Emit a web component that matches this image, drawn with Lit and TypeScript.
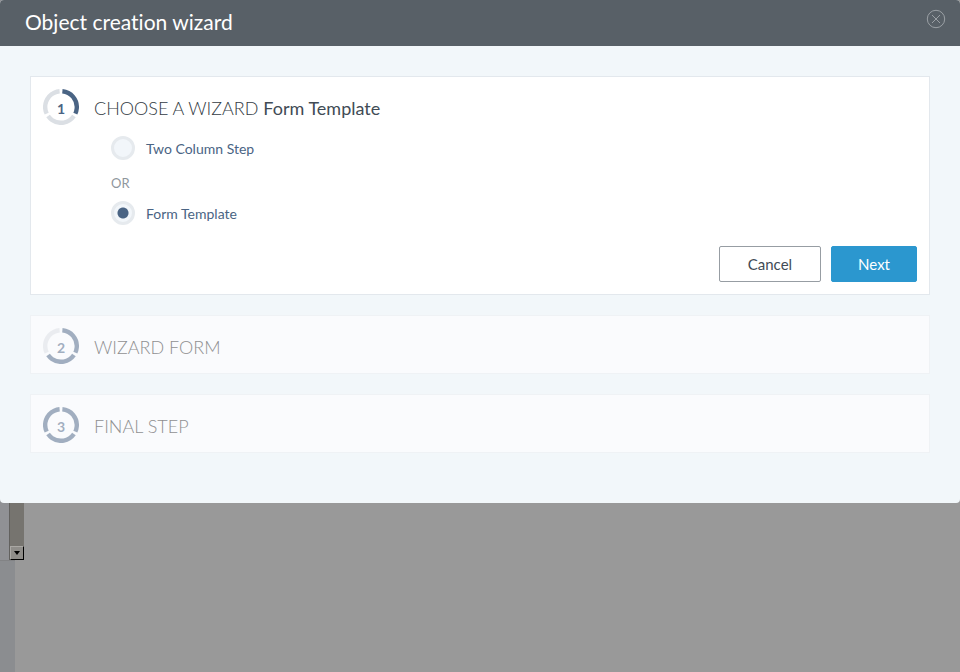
import { LitElement, html, css, svg } from "lit";
import { customElement, property, state } from "lit/decorators.js";

@customElement("step-ring")
class StepRing extends LitElement {
  @property({ type: Number }) step = 1;
  @property({ type: Array }) colors: string[] = [];

  static styles = css`
    :host { display: block; width: 36px; height: 36px; flex: none; }
    svg { display: block; }
    circle { fill: none; stroke-width: 4.4; }
    text { font: 700 14px Lato, sans-serif; fill: #4a6484; text-anchor: middle; }
  `;

  render() {
    return html`<svg width="36" height="36" viewBox="0 0 36 36" aria-hidden="true">
      ${this.colors.map(
        (c, i) => svg`<circle cx="18" cy="18" r="15.8" pathLength="360" stroke=${c}
          stroke-dasharray="110 250" transform="rotate(${i * 120 - 85} 18 18)"></circle>`
      )}
      <text x="18" y="25">${this.step}</text>
    </svg>`;
  }
}

@customElement("app-root")
class AppRoot extends LitElement {
  @state() choice = "Form Template";

  static styles = css`
    :host { display: block; font-family: Lato, "Open Sans", sans-serif; font-variant-ligatures: none; color: #414b55; }
    * { box-sizing: border-box; }
    .page { position: relative; min-height: 100vh; background: #999; display: flex; flex-direction: column; align-items: flex-start; }
    .list { display: flex; justify-content: flex-end; width: 24px; height: 560px; background: #909195; }
    .track { width: 15px; display: flex; align-items: flex-end; background: #76746f; border-left: 1px solid #62615f; }
    .arrow { width: 100%; height: 14px; display: grid; place-items: center; background: #8f8d89; border: 1px solid #aaa8a4; border-right: 1px solid #000; border-bottom: 1px solid #000; }
    .side { width: 15px; flex: 1; background: #8b8d90; border-top: 1px solid #828385; }
    .dialog { position: absolute; inset: 0 0 auto 0; border-radius: 4px; overflow: hidden; background: #f2f7fa; }
    header { height: 46px; padding: 0 14px 2px 25px; background: #586067; display: flex; align-items: center; justify-content: space-between; }
    h1 { margin: 0; font-size: 21px; line-height: 28px; font-weight: 400; color: #fff; }
    .close { align-self: flex-start; margin-top: 9px; padding: 0; border: 0; background: none; width: 20px; height: 20px; }
    .close svg { display: block; }
    .body { padding: 30px 30px 50px; display: flex; flex-direction: column; gap: 20px; }
    .card { border: 1px solid #e3e8ed; background: #fff; padding: 12px; }
    .idle { padding-bottom: 9px; background: #fafbfd; border-color: #eff2f5; }
    .idle .head { opacity: 0.5; }
    .head { display: flex; gap: 15px; align-items: flex-start; }
    h2 { margin: 0; padding-top: 7px; font-size: 18px; line-height: 24px; font-weight: 300; color: #333b44; }
    h2 strong { font-weight: 400; color: #414b55; }
    .idle h2 { color: #222; }
    .options { margin: 11px 0 0; padding: 0 0 0 68px; border: 0; display: flex; flex-direction: column; align-items: flex-start; }
    .option { display: flex; align-items: center; gap: 11px; font-size: 14px; line-height: 22px; color: #4a6484; }
    .option span { padding-top: 1px; }
    input { appearance: none; margin: 0; width: 24px; height: 24px; border-radius: 50%; border: 3px solid #e6eaee; background: #f2f6fa; }
    input:checked { background: radial-gradient(circle, #4a6484 5px, #f2f6fa 6px); }
    .or { font-size: 13px; line-height: 21px; padding: 13px 0 7px; color: #8f969d; }
    .actions { display: flex; justify-content: flex-end; gap: 10px; margin-top: 21px; }
    .btn { height: 36px; padding: 0 28px; border: 1px solid #979da3; border-radius: 2px; background: #fff; font: 400 15px/20px Lato, sans-serif; color: #414b55; }
    .primary { padding: 0 26px; background: #2b97cf; border-color: #2b97cf; color: #fff; }
  `;

  private option(name: string) {
    return html`<label class="option">
      <input type="radio" name="template" .checked=${this.choice === name} @change=${() => (this.choice = name)} />
      <span>${name}</span>
    </label>`;
  }

  render() {
    const on = "#4a6484";
    const off = "#dbdfe4";
    return html`<div class="page">
      <div class="list"><div class="track"><div class="arrow">
        <svg width="6" height="4" viewBox="0 0 6 4"><path d="M0 0H6L3 4Z" fill="#000" /></svg>
      </div></div></div>
      <div class="side"></div>
      <div class="dialog" role="dialog" aria-labelledby="title">
        <header>
          <h1 id="title">Object creation wizard</h1>
          <button class="close" aria-label="Close">
            <svg width="20" height="20" viewBox="0 0 20 20" fill="none" stroke="#9ba0a5" stroke-width="1">
              <circle cx="10" cy="10" r="8.7" /><path d="M6 6L14 14M14 6L6 14" />
            </svg>
          </button>
        </header>
        <div class="body">
          <section class="card">
            <div class="head">
              <step-ring .step=${1} .colors=${[on, off, off]}></step-ring>
              <h2>CHOOSE A WIZARD <strong>Form Template</strong></h2>
            </div>
            <fieldset class="options" aria-label="Wizard">
              ${this.option("Two Column Step")}
              <div class="or">OR</div>
              ${this.option("Form Template")}
            </fieldset>
            <div class="actions">
              <button class="btn">Cancel</button>
              <button class="btn primary">Next</button>
            </div>
          </section>
          <section class="card idle">
            <div class="head">
              <step-ring .step=${2} .colors=${[on, on, off]}></step-ring>
              <h2>WIZARD FORM</h2>
            </div>
          </section>
          <section class="card idle">
            <div class="head">
              <step-ring .step=${3} .colors=${[on, on, on]}></step-ring>
              <h2>FINAL STEP</h2>
            </div>
          </section>
        </div>
      </div>
    </div>`;
  }
}
